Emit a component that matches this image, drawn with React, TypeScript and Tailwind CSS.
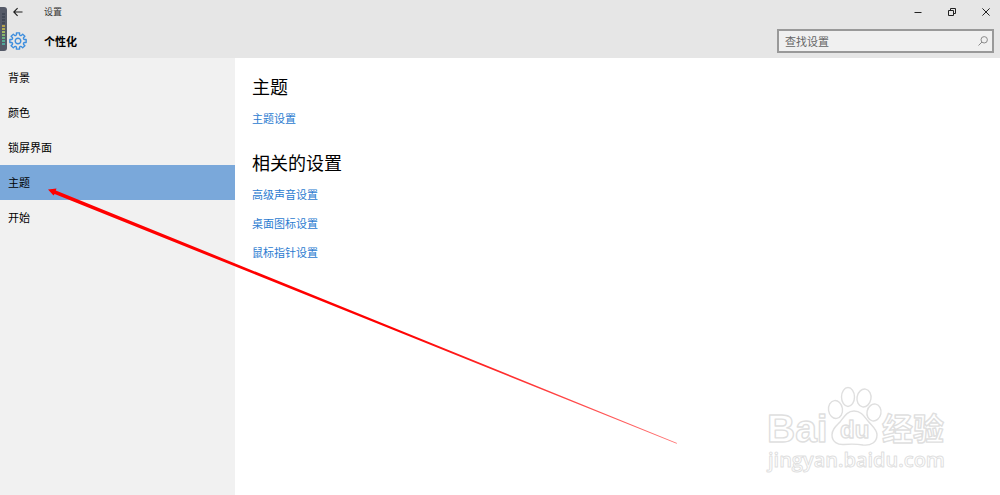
import React from 'react';

const navItems = ['背景', '颜色', '锁屏界面', '主题', '开始'];

const sections = [
  { title: '主题', links: ['主题设置'] },
  { title: '相关的设置', links: ['高级声音设置', '桌面图标设置', '鼠标指针设置'] },
];

const meterColors = [
  '#414856', '#414856', '#414856', '#414856', '#b5a24e', '#b3ae55', '#a5b860', '#86b56b', '#68b183', '#56ab93', '#4fa59a',
];

// Eight-tooth gear outline, centred on 0,0
function gearPath() {
  const point = (r: number, deg: number) => {
    const a = (deg * Math.PI) / 180;
    return `${(r * Math.cos(a)).toFixed(2)} ${(r * Math.sin(a)).toFixed(2)}`;
  };
  let d = '';
  for (let i = 0; i < 8; i++) {
    const a = i * 45;
    d += `${i === 0 ? 'M' : 'L'}${point(6.6, a - 13)} L${point(8.3, a - 11)} L${point(8.3, a + 11)} L${point(6.6, a + 13)} `;
    d += `Q${point(5.4, a + 22.5)} ${point(6.6, a + 32)} `;
  }
  return d + 'Z';
}

function GearIcon() {
  return (
    <svg className="w-[18px] h-[18px]" viewBox="-9 -9 18 18" fill="none" stroke="#3d8ede" strokeWidth="1.4" strokeLinejoin="round">
      <path d={gearPath()} />
      <circle r="2.8" />
    </svg>
  );
}

function LevelMeter() {
  return (
    <div className="absolute left-0 top-[7px] w-[7px] h-11 bg-[#555a68] rounded-r-[3px] flex flex-col justify-center gap-px pl-[2px]">
      {meterColors.map((color, i) => (
        <span key={i} className="block w-[3px] h-[2px]" style={{ backgroundColor: color }} />
      ))}
    </div>
  );
}

function TitleBar() {
  return (
    <div className="h-6 flex items-center justify-between">
      <div className="flex items-center">
        <button aria-label="返回" className="w-9 h-6 mr-2 flex items-center justify-center">
          <svg className="w-[10px] h-[10px]" viewBox="0 0 10 10" fill="none" stroke="#1c1c1c" strokeWidth="1.1">
            <path d="M9.5 5H1M4.6 1.2L.8 5l3.8 3.8" />
          </svg>
        </button>
        <span className="text-[9px] text-[#333]">设置</span>
      </div>
      <div className="flex gap-[6px]">
        <button aria-label="最小化" className="w-7 h-6 flex items-center justify-center">
          <svg className="w-2 h-2" viewBox="0 0 8 8" stroke="#222">
            <path d="M.5 4.5h7" />
          </svg>
        </button>
        <button aria-label="还原" className="w-7 h-6 flex items-center justify-center">
          <svg className="w-2 h-2" viewBox="0 0 8 8" fill="none" stroke="#222">
            <path d="M.5 2.5h5v5h-5zM2.5 2.5v-2h5v5h-2" />
          </svg>
        </button>
        <button aria-label="关闭" className="w-7 h-6 flex items-center justify-center">
          <svg className="w-2 h-2" viewBox="0 0 8 8" stroke="#222">
            <path d="M.4.4l7.2 7.2M7.6.4L.4 7.6" />
          </svg>
        </button>
      </div>
    </div>
  );
}

function Header() {
  return (
    <header className="relative bg-[#e6e6e6]">
      <TitleBar />
      <div className="h-[34px] flex items-center justify-between pr-[6px]">
        <div className="flex items-center">
          <div className="w-9 mr-2 flex justify-center">
            <GearIcon />
          </div>
          <h1 className="text-[11px] font-bold text-black">个性化</h1>
        </div>
        <label className="w-[217px] h-6 flex items-center bg-[#f0f0f0] border-2 border-[#999] pl-[6px] pr-1">
          <input
            type="text"
            aria-label="查找设置"
            placeholder="查找设置"
            className="flex-1 min-w-0 text-[11px] leading-5 bg-transparent outline-none placeholder:text-[#666]"
          />
          <svg className="w-[10px] h-[10px]" viewBox="0 0 10 10" fill="none" stroke="#8a8a8a">
            <circle cx="6.2" cy="3.8" r="3.2" />
            <path d="M4 6L.5 9.5" />
          </svg>
        </label>
      </div>
      <LevelMeter />
    </header>
  );
}

function Sidebar({ selected }: { selected: string }) {
  return (
    <nav className="w-[235px] shrink-0 bg-[#f1f1f1] pt-[2px]">
      {navItems.map(item => (
        <button
          key={item}
          className={`w-full h-[35px] flex items-center pl-2 text-[11px] text-black ${
            item === selected ? 'bg-[#7aa8da]' : ''
          }`}
        >
          {item}
        </button>
      ))}
    </nav>
  );
}

function Pointer() {
  return (
    <svg className="absolute left-12 top-[188px] w-[630px] h-[256px] pointer-events-none" viewBox="0 0 630 256">
      <defs>
        <linearGradient id="pointer-fade" x1="0" y1="0" x2="1" y2="0">
          <stop offset="0" stopColor="#f00" />
          <stop offset="0.55" stopColor="#f00" />
          <stop offset="1" stopColor="#f00" stopOpacity="0.55" />
        </linearGradient>
      </defs>
      <path d="M0 1.5L8.5 .5L7.8 2.5L629 255L628.7 255.8L6.6 6L5.5 7.5Z" fill="url(#pointer-fade)" />
    </svg>
  );
}

function Watermark() {
  return (
    <svg
      className="absolute right-[50px] bottom-5 w-[190px] h-[90px] pointer-events-none"
      viewBox="0 0 190 90"
      fill="#fff"
      stroke="#dfdfdf"
      strokeWidth="1.4"
      strokeLinejoin="round"
    >
      <text x="7" y="57" fontSize="39" fontWeight="700" fontFamily="'Liberation Sans', sans-serif">Bai</text>
      <ellipse cx="75.500" cy="24.500" rx="7" ry="9" transform="rotate(-8 75.500 24.500)" />
      <ellipse cx="88" cy="12" rx="6.500" ry="9.500" />
      <ellipse cx="104" cy="13" rx="7" ry="9" transform="rotate(10 104 13)" />
      <ellipse cx="114" cy="27.500" rx="7" ry="8.500" transform="rotate(12 114 27.500)" />
      <path d="M94 26C87 26 84 32 80 37C76 41 72 44 72 50C72 57 78 60 84 59.500C90 59 97 59 103 60C111 61 117 57 117 50C117 44 112 41 108 36C104 31 101 26 94 26Z" />
      <text x="80" y="53" fontSize="24" fontWeight="700" fontFamily="'Liberation Sans', sans-serif">du</text>
      <text x="122" y="55" fontSize="31" fontWeight="700" fontFamily="'Noto Sans CJK SC', sans-serif">经验</text>
      <text x="8" y="82" fontSize="20" fontWeight="600" strokeWidth="1" fontFamily="'Open Sans', sans-serif">jingyan.baidu.com</text>
    </svg>
  );
}

export default function App() {
  return (
    <div className="relative min-h-screen flex flex-col bg-white font-['Noto_Sans_CJK_SC',sans-serif]">
      <Header />
      <div className="flex-1 flex">
        <Sidebar selected="主题" />
        <main className="flex-1 pl-[17px] pt-4">
          {sections.map(section => (
            <section key={section.title} className="mb-[17px]">
              <h2 className="text-[18px] leading-6 text-black mb-[6px]">{section.title}</h2>
              <ul>
                {section.links.map(link => (
                  <li key={link} className="h-[29px] flex items-center">
                    <a href="#" className="text-[11px] text-[#2b7bd0]">{link}</a>
                  </li>
                ))}
              </ul>
            </section>
          ))}
        </main>
      </div>
      <Pointer />
      <Watermark />
    </div>
  );
}
